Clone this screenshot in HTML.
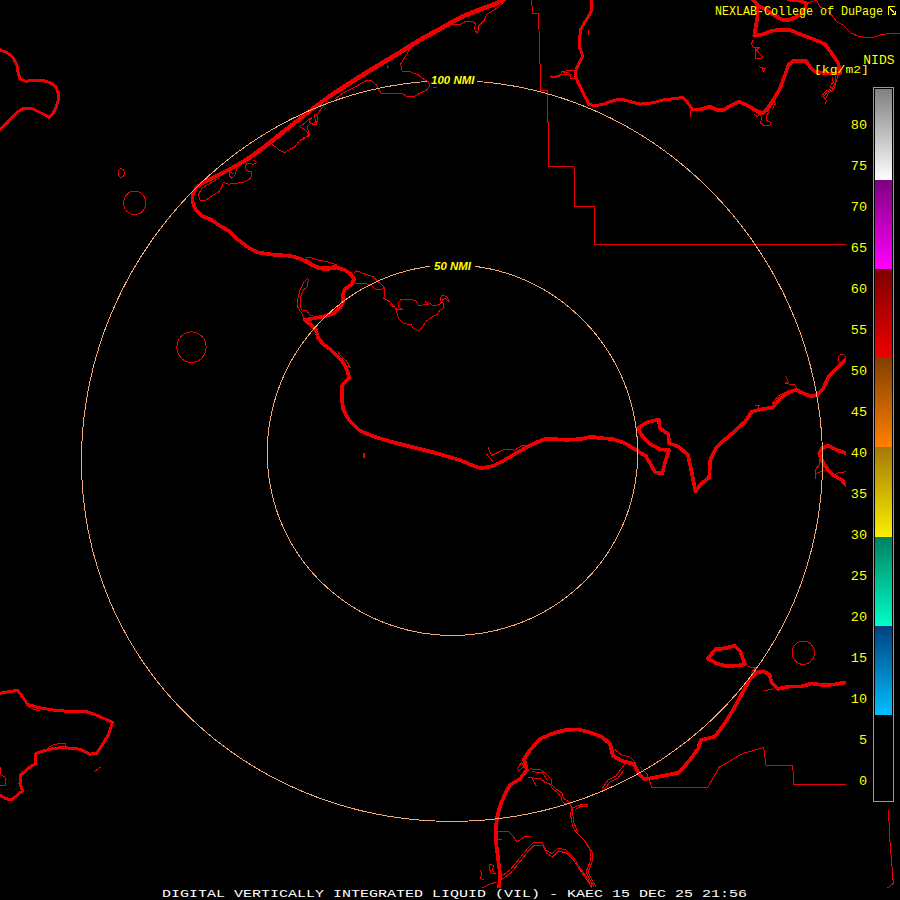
<!DOCTYPE html>
<html><head><meta charset="utf-8"><title>NEXLAB KAEC Digital VIL</title>
<style>
html,body{margin:0;padding:0;background:#000;}
body{width:900px;height:900px;position:relative;overflow:hidden;font-family:"Liberation Mono",monospace;}
svg{position:absolute;left:0;top:0;}
.t{position:absolute;white-space:pre;line-height:1;color:#ffff00;transform-origin:0 0;}
.lab{position:absolute;right:33.1px;width:40px;text-align:right;color:#ffff00;font-size:13px;line-height:1;white-space:pre;transform-origin:100% 0;transform:scale(1.04,1.05);}
.ring{position:absolute;color:#ffff00;font-family:"Liberation Sans",sans-serif;font-weight:bold;font-style:italic;font-size:11px;line-height:1;white-space:pre;padding:0 3px;transform-origin:0 0;transform:scale(1.04,0.95);}
</style></head><body>
<svg width="900" height="900" viewBox="0 0 900 900">
<defs><linearGradient id="g0" x1="0" y1="0" x2="0" y2="1"><stop offset="0" stop-color="#808080"/><stop offset="1" stop-color="#ffffff"/></linearGradient><linearGradient id="g1" x1="0" y1="0" x2="0" y2="1"><stop offset="0" stop-color="#800080"/><stop offset="1" stop-color="#ff00ff"/></linearGradient><linearGradient id="g2" x1="0" y1="0" x2="0" y2="1"><stop offset="0" stop-color="#7c0000"/><stop offset="1" stop-color="#f00000"/></linearGradient><linearGradient id="g3" x1="0" y1="0" x2="0" y2="1"><stop offset="0" stop-color="#804000"/><stop offset="1" stop-color="#ff8000"/></linearGradient><linearGradient id="g4" x1="0" y1="0" x2="0" y2="1"><stop offset="0" stop-color="#a57808"/><stop offset="1" stop-color="#faf000"/></linearGradient><linearGradient id="g5" x1="0" y1="0" x2="0" y2="1"><stop offset="0" stop-color="#008060"/><stop offset="1" stop-color="#00ffc8"/></linearGradient><linearGradient id="g6" x1="0" y1="0" x2="0" y2="1"><stop offset="0" stop-color="#004080"/><stop offset="1" stop-color="#00c0ff"/></linearGradient></defs>
<rect width="900" height="900" fill="#000"/>
<g fill="none" stroke="#ee0000" stroke-linejoin="round" stroke-linecap="round" shape-rendering="crispEdges">
<path stroke-width="1" d="M531.5 0.0 L532.7 13.3 L538.5 13.3 L540.8 90.5 L547.8 90.5 L548.3 166.8 L574.0 166.8 L574.7 206.5 L594.5 206.5 L595.0 244.5 L846.0 244.5 M640.0 767.0 L647.0 774.0 L651.7 787.3 L707.7 787.3 L719.3 767.0 L742.7 753.5 L763.7 747.6 L766.0 765.4 L792.8 765.4 L793.5 784.5 L846.0 784.5 M888.4 810.0 L890.0 842.2 L892.2 868.9 L893.3 883.3 L887.8 887.8 M806.7 3.3 L816.7 0.0 M816.7 0.0 L820.0 6.7 L826.7 10.0 L831.7 15.0 L836.7 21.7 L843.3 25.0 L851.1 33.3 L860.0 36.7 L871.1 37.8 L882.2 34.4 L893.3 33.3 L900.0 33.3 M327.5 101.7 L321.7 108.3 L316.7 115.0 L317.5 118.3 L316.7 124.2 L312.5 124.2 L309.2 121.7 L311.7 117.5 L308.3 120.0 L303.3 124.2 L299.2 126.7 L304.2 129.2 L307.5 132.5 L309.2 135.8 L304.2 137.5 L299.2 140.8 L295.0 146.7 L290.0 149.2 L285.0 152.5 L280.0 150.8 L276.7 147.5 L272.5 145.0 M253.3 160.0 L256.7 162.5 L253.3 164.2 L246.7 163.3 L245.0 166.7 L246.7 170.8 L251.7 171.7 L250.8 178.3 L243.3 182.5 L235.0 183.3 L228.3 184.2 L223.3 182.5 L221.7 187.5 L218.3 192.5 L211.7 195.8 L205.0 200.8 L200.0 200.0 L198.3 195.0 L201.7 188.3 L210.0 183.3 L218.3 178.3 M236.7 168.3 L235.0 175.0 L231.7 178.3 L229.2 175.8 L230.0 172.5 L233.3 173.3 M507.0 -1.0 L503.3 2.2 L496.7 8.3 L492.2 11.1 L486.7 14.4 L484.4 20.0 L478.9 25.6 L478.3 30.0 L477.2 33.3 L474.4 28.9 L475.6 23.9 L471.7 21.1 L465.6 21.1 L462.2 23.9 L457.8 24.4 L450.0 25.0 M412.0 46.0 L404.7 57.3 L400.7 64.0 L402.0 71.3 L408.7 71.3 L418.0 74.7 L424.7 80.0 L428.7 82.0 L429.3 86.7 L426.0 90.7 L420.7 92.7 L415.3 96.0 L406.0 96.0 L402.0 93.3 L392.7 93.3 L382.0 94.0 L378.0 89.3 L376.7 85.3 L371.3 80.7 L367.3 80.0 L356.7 86.0 L343.3 92.7 L335.3 98.7 M387.0 65.0 L388.0 67.5 M433.3 87.5 L437.3 88.0 M314.0 114.3 L316.3 122.5 L310.5 123.7 L307.0 127.2 L309.3 134.2 L302.3 140.0 M574.7 70.0 L568.0 70.5 L561.0 72.0 L561.0 74.5 L566.0 74.0 L570.0 75.5 L571.0 78.5 L574.7 78.0 M563.0 73.0 L568.0 72.5 L571.0 74.5 M588.2 30.3 L588.2 35.0 M690.2 110.8 L690.2 116.7 M753.3 40.0 L751.3 44.0 L753.3 47.3 L756.0 48.7 L755.3 58.7 L761.3 58.7 L762.7 57.3 L756.7 50.0 L759.3 47.3 L755.0 47.3 M759.3 66.7 L765.3 68.7 L763.3 71.3 L762.0 68.0 M754.7 114.7 L757.3 116.7 L760.0 113.3 L762.0 118.0 L760.0 123.3 L764.0 125.3 L770.0 125.3 L771.3 122.7 L766.7 120.7 L766.0 115.3 L768.7 112.7 M838.0 74.0 L836.7 80.7 L833.3 86.0 L832.0 90.0 L826.7 92.7 L823.3 96.7 L826.7 100.7 L825.3 104.0 M832.0 76.7 L833.3 82.0 L830.0 86.0 L832.0 88.7 L825.3 91.3 L821.3 96.7 M835.3 76.7 L836.0 83.3 L834.0 88.7 L828.0 94.0 L825.3 99.3 M774.0 100.7 L775.3 104.0 L772.7 108.7 M337.5 351.7 L343.3 358.7 L346.8 361.0 L350.3 368.0 L346.8 365.7 M305.0 258.3 L308.3 257.0 L318.3 260.0 L330.0 262.5 L336.7 265.0 L326.7 266.7 L316.7 265.8 L310.0 261.7 L305.0 258.3 M307.5 278.3 L304.2 281.7 L300.0 290.0 L297.5 300.0 L297.5 306.7 L301.7 313.3 L304.2 319.2 M307.5 278.3 L308.3 279.2 L307.5 286.7 L303.3 290.0 L300.0 298.3 L300.0 306.7 L302.5 310.8 L306.7 310.8 L310.0 315.0 L315.0 316.7 M354.2 272.5 L356.7 270.8 L365.0 274.2 L373.3 276.7 L379.2 282.5 L384.2 287.5 L385.0 295.0 L383.3 298.3 L388.3 300.8 L393.3 305.0 L396.7 311.7 L398.3 318.3 L403.3 323.3 L411.7 325.0 L413.3 328.3 L419.2 330.8 L421.7 327.5 L426.7 320.8 L432.5 316.7 L437.5 314.2 L440.0 310.0 L444.2 307.5 L443.3 303.3 L440.0 300.0 L441.7 295.0 L446.7 296.7 L449.2 301.7 L445.0 298.3 L442.5 300.0 L440.0 304.2 L433.3 305.8 L430.0 303.3 L425.0 301.7 L428.3 304.2 L418.3 305.8 L415.8 300.8 L410.0 299.2 L400.8 299.7 L398.3 303.3 L399.2 307.5 L402.5 309.2 L396.7 309.2 L390.0 304.2 M355.0 283.3 L365.0 283.3 L371.7 285.8 L375.0 289.2 L380.8 290.0 L384.2 287.5 M488.0 447.3 L491.5 455.5 L504.3 449.2 L514.8 450.1 L523.0 445.0 L530.0 446.0 M486.8 454.3 L492.7 461.3 M364.3 453.5 L365.0 457.5 L363.5 457.5 L363.5 453.5 L364.3 453.5 M785.8 376.7 L788.3 381.7 L785.0 383.3 L795.0 385.0 L797.0 389.0 M755.0 405.0 L759.2 405.0 L758.3 407.5 M819.2 455.0 L819.2 465.0 L815.0 470.0 L815.0 479.2 M816.7 473.3 L825.0 470.0 M836.7 473.3 L846.0 471.7 M772.0 404.0 L778.0 396.0 L786.0 392.0 M0.0 766.7 L0.8 775.0 L5.8 777.5 L5.8 785.0 L0.0 785.0 M94.2 771.7 L100.0 767.5 M48.3 747.5 L55.0 744.2 L65.0 743.3 L65.0 746.5 M26.0 705.0 L33.0 709.0 L40.0 711.0 M570.6 803.9 L571.7 808.3 L570.6 815.0 L571.7 821.7 L573.3 828.3 L576.0 832.0 L584.0 840.0 L590.0 850.0 L590.0 862.0 L586.0 872.0 L590.0 880.0 L594.0 887.0 M572.2 807.2 L572.8 813.9 L573.9 822.8 L576.7 829.4 L578.0 834.0 L586.0 842.0 L592.0 852.0 L592.0 862.0 L588.0 872.0 L592.0 880.0 L596.0 887.0 M530.0 768.9 L540.0 769.4 L546.7 774.4 L551.1 779.4 L551.7 785.0 L556.7 789.4 L562.2 793.3 L563.3 798.3 L567.2 800.6 L570.6 803.9 M528.0 777.0 L532.2 777.8 L541.1 778.9 L545.6 782.8 L549.4 783.3 L552.2 788.3 L557.8 792.8 L561.1 797.2 L562.2 801.7 L565.6 803.9 L570.6 803.9 M532.2 771.7 L542.2 772.8 L545.6 777.2 L547.8 781.1 M532.2 777.8 L533.9 781.7 L536.1 785.6 L535.0 783.0 M521.1 762.8 L517.8 768.3 L518.9 771.1 L524.4 766.1 L521.1 762.8 M572.8 808.3 L577.8 805.6 L583.3 804.4 L588.3 805.0 L586.7 806.7 L581.1 806.1 L575.6 809.4 M602.0 789.0 L608.0 780.0 L616.0 776.0 L622.0 768.0 L626.0 762.0 M604.0 790.0 L610.0 782.0 L618.0 778.0 L624.0 770.0 M614.0 749.0 L622.0 755.0 L630.0 757.0 L636.0 763.0 M497.0 831.0 L508.0 831.0 L513.0 836.0 L517.0 842.0 L524.0 837.0 L531.0 836.4 M497.0 839.0 L502.0 839.0 M502.0 876.0 L510.0 870.0 L520.0 858.0 L528.0 848.0 L534.0 842.0 L542.0 842.0 L546.0 850.0 L552.0 854.0 L558.0 848.0 L566.0 850.0 L574.0 858.0 L580.0 868.0 L586.0 876.0 L592.0 886.0 M502.5 879.0 L510.5 873.0 L520.5 861.0 L528.5 851.0 L534.5 845.0 L542.5 845.0 L546.5 853.0 L552.5 857.0 L558.5 851.0 L566.5 853.0 L574.5 861.0 L580.5 871.0 L586.5 879.0 L592.5 889.0 M480.0 870.0 L482.0 874.0 L480.0 878.0 L484.0 880.0 M490.0 864.0 L494.0 866.0 L492.0 870.0 L496.0 874.0 L491.0 873.0 L489.0 868.0 L490.0 864.0 M482.0 888.0 L490.0 884.0 L497.0 882.0 M748.5 666.7 L755.5 667.8 L751.0 673.0 M763.7 691.2 L773.0 688.8"/>
<path stroke-width="2" d="M550.5 76.5 L555.0 77.0 L560.5 75.2"/>
<path stroke-width="4.6" d="M511.0 -6.0 L501.0 0.3 L496.7 3.3 L480.0 9.5 L463.3 16.1 L450.0 23.3 L436.7 30.7 L423.3 38.0 L410.0 46.0 L396.7 54.4 L383.3 62.4 L370.0 70.4 L356.7 78.7 L343.3 87.3 L330.0 96.0"/>
<path stroke-width="4" d="M330.0 96.0 L325.0 99.5 L313.3 108.3 L296.7 121.2 L280.0 134.2 L263.3 147.5 L246.7 159.5 L230.0 169.2 L213.3 177.5 L203.0 183.0"/>
<g stroke-width="1"><ellipse cx="121.2" cy="173.0" rx="3.2" ry="4.2"/><ellipse cx="134.7" cy="202.9" rx="11.1" ry="11.8"/><ellipse cx="191.5" cy="347.2" rx="14.6" ry="15.3"/><ellipse cx="803.3" cy="652.7" rx="11.2" ry="11.7"/><ellipse cx="842.0" cy="359.0" rx="4.0" ry="4.3"/></g>
<path stroke-width="3" d="M-4.6 47.8 L0.0 49.7 L6.7 52.5 L12.5 56.7 L16.7 64.2 L18.3 73.3 L20.0 78.7 L25.8 81.3 L33.3 80.3 L41.7 80.3 L50.0 82.5 L55.8 86.7 L58.3 93.3 L58.3 100.0 L55.8 108.3 L52.5 114.2 L49.2 117.2 L40.0 112.5 L31.7 108.3 L23.3 108.3 L16.7 112.5 L8.3 121.7 L0.0 129.7 L-3.6 133.2 M590.8 -5.0 L591.1 0.0 L591.8 10.2 L588.6 16.6 L584.7 22.4 L580.9 28.8 L579.6 38.3 L579.0 46.0 L581.5 52.4 L582.8 56.2 L579.6 62.6 L575.8 70.3 L575.1 75.4 L577.7 81.8 L582.2 90.7 L586.0 98.4 L589.2 104.8 L596.2 105.4 L602.6 104.5 L610.3 101.6 L617.9 99.4 L624.3 99.9 L632.0 102.2 L640.0 104.1 L654.0 102.7 L663.3 99.9 L675.0 98.5 L683.2 97.5 L687.8 102.7 L692.5 109.7 L700.0 109.5 M-4.9 694.2 L0.0 693.3 L8.3 691.7 L17.5 690.3 L22.5 696.7 L27.5 704.2 L38.3 707.5 L53.3 710.0 L66.7 711.3 L85.8 711.3 L98.3 715.8 L112.5 722.5 L108.3 735.0 L103.3 743.3 L96.7 753.3 L90.0 754.2 L80.0 749.2 L71.7 748.3 L61.7 747.5 L50.0 749.2 L35.8 753.3 L35.8 763.3 L28.3 768.3 L20.8 775.0 L20.0 783.3 L22.5 790.8 L16.7 795.8 L10.8 800.0 L5.0 798.3 L0.0 795.0 L-4.2 792.2"/>
<path stroke-width="3.7" d="M511.0 -6.0 L501.0 0.3 L496.7 3.3 L480.0 9.5 L463.3 16.1 L450.0 23.3 L436.7 30.7 L423.3 38.0 L410.0 46.0 L396.7 54.4 L383.3 62.4 L370.0 70.4 L356.7 78.7 L343.3 87.3 L330.0 96.0 L325.0 99.5 L313.3 108.3 L296.7 121.7 L280.0 135.0 L263.3 148.3 L246.7 160.0 L230.0 169.2 L213.3 177.5 L201.7 183.3 L195.8 188.3 L192.5 195.0 L192.5 201.7 L195.8 210.0 L201.7 215.8 L211.7 220.0 L220.0 225.8 L230.0 231.7 L238.3 240.0 L248.3 247.5 L258.3 252.5 L273.3 254.7 L290.0 255.8 L301.7 259.2 L310.0 264.2 L318.3 268.3 L326.7 269.2 L336.7 267.5 L345.0 270.0 L350.8 274.2 L354.2 279.2 L351.7 284.2 L345.0 289.2 L342.5 295.0 L343.3 301.7 L340.0 307.5 L333.3 313.3 L323.3 316.7 L313.3 318.3 L305.0 320.0 L310.0 324.2 L315.8 330.0 L318.3 338.3 L323.3 344.2 L331.7 350.5 L342.2 361.0 L346.8 369.2 L349.2 377.3 L342.2 385.5 L341.7 398.3 L343.3 410.0 L349.2 420.5 L358.5 429.8 L371.3 435.7 L390.0 441.5 L413.3 447.3 L436.7 453.2 L460.0 460.2 L474.0 466.0 L481.0 468.3 L492.7 466.0 L504.3 460.2 L516.0 453.2 L531.7 444.5 L545.7 438.7 L566.7 439.8 L580.7 439.1 L591.2 436.8 L601.7 438.2 L613.3 439.1 L625.0 443.3 L636.7 450.3 L646.0 456.2 L650.7 464.3 L655.3 472.5 L662.3 473.2 L665.8 459.7 L669.3 450.3 L660.0 449.2 L650.7 444.5 L642.5 436.3 L637.8 428.2 L647.2 422.3 L658.8 419.5 L660.0 428.2 L668.2 434.0 L669.3 443.3 L678.7 446.8 L688.0 455.0 L691.5 471.3 L695.5 491.2 L700.8 484.2 L709.2 477.5 L710.3 460.0 L715.8 448.3 L723.3 440.8 L733.3 432.5 L745.0 421.7 L751.7 411.7 L761.7 409.2 L772.5 407.5 L780.0 398.3 L788.3 392.5 L795.8 389.7 L803.3 393.3 L810.8 396.3 L817.5 395.0 L823.3 388.3 L829.2 375.8 L836.7 368.3 L845.0 359.7 M700.0 109.5 L710.0 106.7 L716.7 110.0 L723.3 110.0 L731.7 105.0 L739.2 101.7 L746.7 105.0 L755.0 110.0 L762.5 113.3 L766.7 110.0 L773.3 100.0 L780.0 88.3 L785.0 75.0 L788.3 65.0 L793.3 60.8 L805.8 60.8 L810.0 66.7 L815.0 71.7 L828.0 73.5 L840.0 73.3 L838.3 63.3 L831.7 53.3 L825.0 44.2 L813.3 39.2 L800.0 34.2 L790.0 30.0 L780.0 29.7 L771.7 30.8 L763.3 34.2 L754.2 35.8 L755.8 26.7 L757.5 16.7 L757.5 5.0 L753.3 0.0 L750.1 -3.8 M757.5 5.0 L766.7 10.0 L775.0 15.8 L783.3 20.0 L790.0 19.7 L800.0 15.0 L804.2 10.0 L806.7 3.3 L800.0 0.8 L793.3 0.0 L788.3 -0.6 M845.8 453.3 L836.7 450.0 L828.3 445.8 L821.7 448.3 L819.2 453.3 L821.7 460.0 L826.7 468.3 L833.3 475.0 L841.7 480.0 L845.8 485.0 M499.0 890.0 L500.0 874.0 L498.0 858.0 L496.0 842.0 L495.6 830.0 L497.0 818.0 L500.0 806.0 L505.0 794.0 L510.0 785.0 L520.0 779.0 L527.0 770.0 L524.0 759.0 L530.0 750.0 L540.0 739.0 L554.0 733.0 L566.0 730.0 L578.0 729.4 L590.0 732.4 L602.0 737.0 L610.0 744.0 L613.0 756.0 L622.0 761.0 L634.0 764.0 L639.0 774.0 L644.0 779.0 L651.7 778.2 L665.7 775.2 L678.5 772.8 L689.0 761.2 L698.3 748.3 L700.7 740.2 L714.7 736.7 L722.8 726.2 L733.3 709.8 L742.7 692.3 L749.7 679.5 L756.7 672.5 L763.7 671.3 L769.5 674.8 L771.8 683.0 L777.7 688.8 L789.3 686.5 L801.0 686.5 L811.5 683.5 L822.0 684.9 L833.7 684.6 L845.3 682.5 M707.7 658.5 L715.8 649.2 L726.3 648.0 L734.5 645.7 L740.3 651.5 L745.0 664.3 L738.0 665.5 L726.3 666.2 L715.8 663.2 L707.7 658.5"/>
</g>
<g fill="none" stroke="#f2a878" stroke-width="1" shape-rendering="crispEdges">
<path d="M477.2 81.5 L480.3 81.7 L483.4 82.0 L486.6 82.3 L489.7 82.6 L492.8 83.0 L496.0 83.4 L499.1 83.8 L502.2 84.2 L505.3 84.7 L508.5 85.2 L511.6 85.7 L514.7 86.2 L517.8 86.8 L520.9 87.4 L524.0 88.0 L527.1 88.7 L530.1 89.4 L533.2 90.1 L536.3 90.8 L539.3 91.6 L542.4 92.4 L545.5 93.2 L548.5 94.1 L551.5 94.9 L554.6 95.9 L557.6 96.8 L560.6 97.7 L563.6 98.7 L566.6 99.7 L569.6 100.8 L572.6 101.8 L575.6 102.9 L578.6 104.1 L581.5 105.2 L584.5 106.4 L587.4 107.6 L590.3 108.8 L593.3 110.0 L596.2 111.3 L599.1 112.6 L602.0 114.0 L604.8 115.3 L607.7 116.7 L610.6 118.1 L613.4 119.5 L616.3 121.0 L619.1 122.5 L621.9 124.0 L624.7 125.5 L627.5 127.0 L630.3 128.6 L633.0 130.2 L635.8 131.9 L638.5 133.5 L641.2 135.2 L644.0 136.9 L646.7 138.6 L649.3 140.4 L652.0 142.1 L654.7 143.9 L657.3 145.7 L659.9 147.6 L662.5 149.5 L665.1 151.3 L667.7 153.3 L670.3 155.2 L672.8 157.1 L675.4 159.1 L677.9 161.1 L680.4 163.1 L682.9 165.2 L685.3 167.3 L687.8 169.3 L690.2 171.5 L692.7 173.6 L695.1 175.7 L697.4 177.9 L699.8 180.1 L702.2 182.3 L704.5 184.6 L706.8 186.8 L709.1 189.1 L711.4 191.4 L713.6 193.7 L715.9 196.0 L718.1 198.4 L720.3 200.8 L722.5 203.2 L724.6 205.6 L726.8 208.0 L728.9 210.4 L731.0 212.9 L733.1 215.4 L735.1 217.9 L737.2 220.4 L739.2 223.0 L741.2 225.5 L743.2 228.1 L745.1 230.7 L747.1 233.3 L749.0 235.9 L750.9 238.5 L752.8 241.2 L754.6 243.9 L756.4 246.6 L758.2 249.3 L760.0 252.0 L761.8 254.7 L763.5 257.5 L765.2 260.2 L766.9 263.0 L768.6 265.8 L770.3 268.6 L771.9 271.4 L773.5 274.3 L775.1 277.1 L776.6 280.0 L778.1 282.8 L779.6 285.7 L781.1 288.6 L782.6 291.5 L784.0 294.5 L785.4 297.4 L786.8 300.3 L788.2 303.3 L789.5 306.3 L790.8 309.3 L792.1 312.2 L793.3 315.2 L794.6 318.3 L795.8 321.3 L797.0 324.3 L798.1 327.4 L799.3 330.4 L800.4 333.5 L801.4 336.5 L802.5 339.6 L803.5 342.7 L804.5 345.8 L805.5 348.9 L806.4 352.0 L807.4 355.1 L808.3 358.3 L809.1 361.4 L810.0 364.5 L810.8 367.7 L811.6 370.8 L812.3 374.0 L813.1 377.2 L813.8 380.3 L814.5 383.5 L815.1 386.7 L815.8 389.9 L816.4 393.1 L816.9 396.3 L817.5 399.5 L818.0 402.7 L818.5 405.9 L818.9 409.1 L819.4 412.3 L819.8 415.5 L820.2 418.7 L820.5 421.9 L820.8 425.2 L821.1 428.4 L821.4 431.6 L821.6 434.8 L821.8 438.1 L822.0 441.3 L822.2 444.5 L822.3 447.8 L822.4 451.0 L822.5 454.2 L822.5 457.5 L822.5 460.7 L822.5 463.9 L822.5 467.2 L822.4 470.4 L822.3 473.6 L822.2 476.8 L822.0 480.1 L821.8 483.3 L821.6 486.5 L821.4 489.7 L821.1 492.9 L820.8 496.1 L820.5 499.3 L820.1 502.5 L819.7 505.7 L819.3 508.9 L818.9 512.1 L818.4 515.3 L817.9 518.5 L817.4 521.7 L816.8 524.8 L816.3 528.0 L815.7 531.2 L815.0 534.3 L814.4 537.5 L813.7 540.6 L812.9 543.7 L812.2 546.9 L811.4 550.0 L810.6 553.1 L809.8 556.2 L808.9 559.3 L808.0 562.4 L807.1 565.5 L806.2 568.5 L805.2 571.6 L804.2 574.6 L803.2 577.7 L802.1 580.7 L801.0 583.7 L799.9 586.8 L798.8 589.8 L797.6 592.7 L796.4 595.7 L795.2 598.7 L794.0 601.7 L792.7 604.6 L791.4 607.5 L790.1 610.5 L788.7 613.4 L787.3 616.3 L785.9 619.2 L784.5 622.0 L783.0 624.9 L781.6 627.7 L780.0 630.6 L778.5 633.4 L776.9 636.2 L775.4 639.0 L773.7 641.8 L772.1 644.5 L770.4 647.3 L768.8 650.0 L767.0 652.7 L765.3 655.4 L763.5 658.1 L761.8 660.8 L759.9 663.5 L758.1 666.1 L756.2 668.7 L754.4 671.3 L752.4 673.9 L750.5 676.5 L748.6 679.0 L746.6 681.6 L744.6 684.1 L742.5 686.6 L740.5 689.1 L738.4 691.6 L736.3 694.0 L734.2 696.4 L732.0 698.8 L729.9 701.2 L727.7 703.6 L725.5 706.0 L723.3 708.3 L721.0 710.6 L718.7 712.9 L716.4 715.2 L714.1 717.4 L711.8 719.7 L709.4 721.9 L707.0 724.1 L704.6 726.3 L702.2 728.4 L699.8 730.5 L697.3 732.7 L694.8 734.7 L692.3 736.8 L689.8 738.9 L687.3 740.9 L684.7 742.9 L682.1 744.9 L679.5 746.8 L676.9 748.7 L674.3 750.7 L671.6 752.5 L669.0 754.4 L666.3 756.3 L663.6 758.1 L660.9 759.9 L658.1 761.6 L655.4 763.4 L652.6 765.1 L649.8 766.8 L647.0 768.5 L644.2 770.1 L641.4 771.8 L638.5 773.4 L635.7 775.0 L632.8 776.5 L629.9 778.0 L627.0 779.5 L624.1 781.0 L621.1 782.5 L618.2 783.9 L615.2 785.3 L612.2 786.7 L609.2 788.0 L606.2 789.4 L603.2 790.7 L600.2 792.0 L597.2 793.2 L594.1 794.4 L591.0 795.6 L588.0 796.8 L584.9 797.9 L581.8 799.1 L578.7 800.2 L575.6 801.2 L572.4 802.3 L569.3 803.3 L566.1 804.3 L563.0 805.2 L559.8 806.1 L556.6 807.1 L553.5 807.9 L550.3 808.8 L547.1 809.6 L543.9 810.4 L540.7 811.2 L537.4 811.9 L534.2 812.6 L531.0 813.3 L527.7 814.0 L524.5 814.6 L521.2 815.2 L518.0 815.8 L514.7 816.3 L511.4 816.8 L508.2 817.3 L504.9 817.8 L501.6 818.2 L498.3 818.6 L495.0 819.0 L491.7 819.4 L488.4 819.7 L485.1 820.0 L481.8 820.3 L478.5 820.5 L475.2 820.7 L471.9 820.9 L468.6 821.0 L465.3 821.2 L461.9 821.3 L458.6 821.3 L455.3 821.4 L452.0 821.4 L448.7 821.4 L445.4 821.3 L442.1 821.3 L438.7 821.2 L435.4 821.0 L432.1 820.9 L428.8 820.7 L425.5 820.5 L422.2 820.3 L418.9 820.0 L415.6 819.7 L412.3 819.4 L409.0 819.0 L405.7 818.6 L402.4 818.2 L399.1 817.8 L395.8 817.3 L392.6 816.8 L389.3 816.3 L386.0 815.8 L382.8 815.2 L379.5 814.6 L376.3 814.0 L373.0 813.3 L369.8 812.6 L366.6 811.9 L363.3 811.2 L360.1 810.4 L356.9 809.6 L353.7 808.8 L350.5 807.9 L347.4 807.1 L344.2 806.1 L341.0 805.2 L337.9 804.3 L334.7 803.3 L331.6 802.3 L328.4 801.2 L325.3 800.2 L322.2 799.1 L319.1 797.9 L316.0 796.8 L313.0 795.6 L309.9 794.4 L306.8 793.2 L303.8 792.0 L300.8 790.7 L297.8 789.4 L294.8 788.0 L291.8 786.7 L288.8 785.3 L285.8 783.9 L282.9 782.5 L279.9 781.0 L277.0 779.5 L274.1 778.0 L271.2 776.5 L268.3 775.0 L265.5 773.4 L262.6 771.8 L259.8 770.1 L257.0 768.5 L254.2 766.8 L251.4 765.1 L248.6 763.4 L245.9 761.6 L243.1 759.9 L240.4 758.1 L237.7 756.3 L235.0 754.4 L232.4 752.5 L229.7 750.7 L227.1 748.7 L224.5 746.8 L221.9 744.9 L219.3 742.9 L216.7 740.9 L214.2 738.9 L211.7 736.8 L209.2 734.7 L206.7 732.7 L204.2 730.5 L201.8 728.4 L199.4 726.3 L197.0 724.1 L194.6 721.9 L192.2 719.7 L189.9 717.4 L187.6 715.2 L185.3 712.9 L183.0 710.6 L180.7 708.3 L178.5 706.0 L176.3 703.6 L174.1 701.2 L172.0 698.8 L169.8 696.4 L167.7 694.0 L165.6 691.6 L163.5 689.1 L161.5 686.6 L159.4 684.1 L157.4 681.6 L155.4 679.0 L153.5 676.5 L151.6 673.9 L149.6 671.3 L147.8 668.7 L145.9 666.1 L144.1 663.5 L142.2 660.8 L140.5 658.1 L138.7 655.4 L137.0 652.7 L135.2 650.0 L133.6 647.3 L131.9 644.5 L130.3 641.8 L128.6 639.0 L127.1 636.2 L125.5 633.4 L124.0 630.6 L122.4 627.7 L121.0 624.9 L119.5 622.0 L118.1 619.2 L116.7 616.3 L115.3 613.4 L113.9 610.5 L112.6 607.5 L111.3 604.6 L110.0 601.7 L108.8 598.7 L107.6 595.7 L106.4 592.7 L105.2 589.8 L104.1 586.8 L103.0 583.7 L101.9 580.7 L100.8 577.7 L99.8 574.6 L98.8 571.6 L97.8 568.5 L96.9 565.5 L96.0 562.4 L95.1 559.3 L94.2 556.2 L93.4 553.1 L92.6 550.0 L91.8 546.9 L91.1 543.7 L90.3 540.6 L89.6 537.5 L89.0 534.3 L88.3 531.2 L87.7 528.0 L87.2 524.8 L86.6 521.7 L86.1 518.5 L85.6 515.3 L85.1 512.1 L84.7 508.9 L84.3 505.7 L83.9 502.5 L83.5 499.3 L83.2 496.1 L82.9 492.9 L82.6 489.7 L82.4 486.5 L82.2 483.3 L82.0 480.1 L81.8 476.8 L81.7 473.6 L81.6 470.4 L81.5 467.2 L81.5 463.9 L81.5 460.7 L81.5 457.5 L81.5 454.2 L81.6 451.0 L81.7 447.8 L81.8 444.5 L82.0 441.3 L82.2 438.1 L82.4 434.8 L82.6 431.6 L82.9 428.4 L83.2 425.2 L83.5 421.9 L83.8 418.7 L84.2 415.5 L84.6 412.3 L85.1 409.1 L85.5 405.9 L86.0 402.7 L86.5 399.5 L87.1 396.3 L87.6 393.1 L88.2 389.9 L88.9 386.7 L89.5 383.5 L90.2 380.3 L90.9 377.2 L91.7 374.0 L92.4 370.8 L93.2 367.7 L94.0 364.5 L94.9 361.4 L95.7 358.3 L96.6 355.1 L97.6 352.0 L98.5 348.9 L99.5 345.8 L100.5 342.7 L101.5 339.6 L102.6 336.5 L103.6 333.5 L104.7 330.4 L105.9 327.4 L107.0 324.3 L108.2 321.3 L109.4 318.3 L110.7 315.2 L111.9 312.2 L113.2 309.3 L114.5 306.3 L115.8 303.3 L117.2 300.3 L118.6 297.4 L120.0 294.5 L121.4 291.5 L122.9 288.6 L124.4 285.7 L125.9 282.8 L127.4 280.0 L128.9 277.1 L130.5 274.3 L132.1 271.4 L133.7 268.6 L135.4 265.8 L137.1 263.0 L138.8 260.2 L140.5 257.5 L142.2 254.7 L144.0 252.0 L145.8 249.3 L147.6 246.6 L149.4 243.9 L151.2 241.2 L153.1 238.5 L155.0 235.9 L156.9 233.3 L158.9 230.7 L160.8 228.1 L162.8 225.5 L164.8 223.0 L166.8 220.4 L168.9 217.9 L170.9 215.4 L173.0 212.9 L175.1 210.4 L177.2 208.0 L179.4 205.6 L181.5 203.2 L183.7 200.8 L185.9 198.4 L188.1 196.0 L190.4 193.7 L192.6 191.4 L194.9 189.1 L197.2 186.8 L199.5 184.6 L201.8 182.3 L204.2 180.1 L206.6 177.9 L208.9 175.7 L211.3 173.6 L213.8 171.5 L216.2 169.3 L218.7 167.3 L221.1 165.2 L223.6 163.1 L226.1 161.1 L228.6 159.1 L231.2 157.1 L233.7 155.2 L236.3 153.3 L238.9 151.3 L241.5 149.5 L244.1 147.6 L246.7 145.7 L249.3 143.9 L252.0 142.1 L254.7 140.4 L257.3 138.6 L260.0 136.9 L262.8 135.2 L265.5 133.5 L268.2 131.9 L271.0 130.2 L273.7 128.6 L276.5 127.0 L279.3 125.5 L282.1 124.0 L284.9 122.5 L287.7 121.0 L290.6 119.5 L293.4 118.1 L296.3 116.7 L299.2 115.3 L302.0 114.0 L304.9 112.6 L307.8 111.3 L310.7 110.0 L313.7 108.8 L316.6 107.6 L319.5 106.4 L322.5 105.2 L325.4 104.1 L328.4 102.9 L331.4 101.8 L334.4 100.8 L337.4 99.7 L340.4 98.7 L343.4 97.7 L346.4 96.8 L349.4 95.9 L352.5 94.9 L355.5 94.1 L358.5 93.2 L361.6 92.4 L364.7 91.6 L367.7 90.8 L370.8 90.1 L373.9 89.4 L376.9 88.7 L380.0 88.0 L383.1 87.4 L386.2 86.8 L389.3 86.2 L392.4 85.7 L395.5 85.2 L398.7 84.7 L401.8 84.2 L404.9 83.8 L408.0 83.4 L411.2 83.0 L414.3 82.6 L417.4 82.3 L420.6 82.0 L423.7 81.7 L426.8 81.5"/><path d="M474.8 266.4 L476.4 266.6 L477.9 266.8 L479.5 267.0 L481.1 267.3 L482.7 267.5 L484.2 267.8 L485.8 268.1 L487.4 268.4 L489.0 268.7 L490.5 269.0 L492.1 269.4 L493.6 269.7 L495.2 270.1 L496.7 270.5 L498.3 270.9 L499.8 271.3 L501.4 271.7 L502.9 272.2 L504.4 272.6 L506.0 273.1 L507.5 273.6 L509.0 274.1 L510.5 274.6 L512.1 275.1 L513.6 275.6 L515.1 276.2 L516.6 276.7 L518.1 277.3 L519.6 277.9 L521.0 278.5 L522.5 279.1 L524.0 279.7 L525.5 280.4 L526.9 281.0 L528.4 281.7 L529.8 282.4 L531.3 283.0 L532.7 283.7 L534.2 284.5 L535.6 285.2 L537.0 285.9 L538.4 286.7 L539.9 287.4 L541.3 288.2 L542.7 289.0 L544.1 289.8 L545.4 290.6 L546.8 291.5 L548.2 292.3 L549.6 293.1 L550.9 294.0 L552.3 294.9 L553.6 295.8 L554.9 296.7 L556.3 297.6 L557.6 298.5 L558.9 299.4 L560.2 300.4 L561.5 301.3 L562.8 302.3 L564.1 303.3 L565.4 304.3 L566.6 305.3 L567.9 306.3 L569.1 307.3 L570.4 308.3 L571.6 309.4 L572.8 310.4 L574.0 311.5 L575.2 312.6 L576.4 313.7 L577.6 314.8 L578.8 315.9 L579.9 317.0 L581.1 318.1 L582.3 319.2 L583.4 320.4 L584.5 321.5 L585.6 322.7 L586.7 323.9 L587.8 325.1 L588.9 326.3 L590.0 327.5 L591.1 328.7 L592.1 329.9 L593.2 331.2 L594.2 332.4 L595.2 333.6 L596.3 334.9 L597.3 336.2 L598.3 337.5 L599.3 338.7 L600.2 340.0 L601.2 341.3 L602.1 342.7 L603.1 344.0 L604.0 345.3 L604.9 346.6 L605.8 348.0 L606.7 349.3 L607.6 350.7 L608.5 352.1 L609.3 353.4 L610.2 354.8 L611.0 356.2 L611.8 357.6 L612.7 359.0 L613.5 360.4 L614.2 361.8 L615.0 363.3 L615.8 364.7 L616.5 366.1 L617.3 367.6 L618.0 369.0 L618.7 370.5 L619.4 371.9 L620.1 373.4 L620.8 374.9 L621.5 376.4 L622.1 377.8 L622.8 379.3 L623.4 380.8 L624.0 382.3 L624.6 383.8 L625.2 385.3 L625.8 386.9 L626.3 388.4 L626.9 389.9 L627.4 391.4 L627.9 393.0 L628.4 394.5 L628.9 396.1 L629.4 397.6 L629.9 399.2 L630.3 400.7 L630.8 402.3 L631.2 403.8 L631.6 405.4 L632.0 407.0 L632.4 408.5 L632.8 410.1 L633.2 411.7 L633.5 413.3 L633.8 414.9 L634.2 416.4 L634.5 418.0 L634.8 419.6 L635.0 421.2 L635.3 422.8 L635.6 424.4 L635.8 426.0 L636.0 427.6 L636.2 429.2 L636.4 430.8 L636.6 432.4 L636.8 434.1 L636.9 435.7 L637.1 437.3 L637.2 438.9 L637.3 440.5 L637.4 442.1 L637.5 443.7 L637.6 445.4 L637.6 447.0 L637.7 448.6 L637.7 450.2 L637.7 451.8 L637.7 453.4 L637.7 455.0 L637.7 456.7 L637.6 458.3 L637.6 459.9 L637.5 461.5 L637.4 463.1 L637.3 464.7 L637.2 466.3 L637.1 468.0 L636.9 469.6 L636.8 471.2 L636.6 472.8 L636.4 474.4 L636.2 476.0 L636.0 477.6 L635.8 479.2 L635.6 480.8 L635.3 482.4 L635.0 484.0 L634.7 485.5 L634.5 487.1 L634.1 488.7 L633.8 490.3 L633.5 491.9 L633.1 493.4 L632.8 495.0 L632.4 496.6 L632.0 498.1 L631.6 499.7 L631.2 501.2 L630.7 502.8 L630.3 504.3 L629.8 505.9 L629.3 507.4 L628.9 509.0 L628.4 510.5 L627.8 512.0 L627.3 513.5 L626.8 515.1 L626.2 516.6 L625.6 518.1 L625.1 519.6 L624.5 521.1 L623.8 522.6 L623.2 524.0 L622.6 525.5 L621.9 527.0 L621.3 528.5 L620.6 529.9 L619.9 531.4 L619.2 532.8 L618.5 534.3 L617.8 535.7 L617.0 537.1 L616.3 538.6 L615.5 540.0 L614.7 541.4 L613.9 542.8 L613.1 544.2 L612.3 545.6 L611.5 547.0 L610.6 548.3 L609.8 549.7 L608.9 551.1 L608.0 552.4 L607.2 553.8 L606.3 555.1 L605.3 556.4 L604.4 557.7 L603.5 559.1 L602.5 560.4 L601.6 561.7 L600.6 562.9 L599.6 564.2 L598.6 565.5 L597.6 566.8 L596.6 568.0 L595.6 569.2 L594.5 570.5 L593.5 571.7 L592.4 572.9 L591.3 574.1 L590.2 575.3 L589.1 576.5 L588.0 577.7 L586.9 578.9 L585.8 580.0 L584.7 581.2 L583.5 582.3 L582.4 583.4 L581.2 584.5 L580.0 585.6 L578.8 586.7 L577.6 587.8 L576.4 588.9 L575.2 590.0 L574.0 591.0 L572.7 592.1 L571.5 593.1 L570.2 594.1 L569.0 595.1 L567.7 596.1 L566.4 597.1 L565.1 598.1 L563.8 599.1 L562.5 600.0 L561.2 601.0 L559.9 601.9 L558.5 602.8 L557.2 603.7 L555.8 604.6 L554.5 605.5 L553.1 606.4 L551.7 607.3 L550.3 608.1 L548.9 608.9 L547.5 609.8 L546.1 610.6 L544.7 611.4 L543.3 612.2 L541.9 613.0 L540.4 613.7 L539.0 614.5 L537.6 615.2 L536.1 615.9 L534.6 616.7 L533.2 617.4 L531.7 618.0 L530.2 618.7 L528.7 619.4 L527.2 620.0 L525.7 620.7 L524.2 621.3 L522.7 621.9 L521.2 622.5 L519.7 623.1 L518.1 623.7 L516.6 624.2 L515.1 624.8 L513.5 625.3 L512.0 625.8 L510.4 626.3 L508.9 626.8 L507.3 627.3 L505.8 627.8 L504.2 628.2 L502.6 628.7 L501.0 629.1 L499.5 629.5 L497.9 629.9 L496.3 630.3 L494.7 630.7 L493.1 631.0 L491.5 631.4 L489.9 631.7 L488.3 632.0 L486.7 632.3 L485.1 632.6 L483.5 632.9 L481.8 633.1 L480.2 633.4 L478.6 633.6 L477.0 633.8 L475.4 634.0 L473.7 634.2 L472.1 634.4 L470.5 634.5 L468.9 634.7 L467.2 634.8 L465.6 634.9 L464.0 635.1 L462.3 635.1 L460.7 635.2 L459.0 635.3 L457.4 635.3 L455.8 635.4 L454.1 635.4 L452.5 635.4 L450.9 635.4 L449.2 635.4 L447.6 635.3 L446.0 635.3 L444.3 635.2 L442.7 635.1 L441.0 635.1 L439.4 634.9 L437.8 634.8 L436.1 634.7 L434.5 634.5 L432.9 634.4 L431.3 634.2 L429.6 634.0 L428.0 633.8 L426.4 633.6 L424.8 633.4 L423.2 633.1 L421.5 632.9 L419.9 632.6 L418.3 632.3 L416.7 632.0 L415.1 631.7 L413.5 631.4 L411.9 631.0 L410.3 630.7 L408.7 630.3 L407.1 629.9 L405.5 629.5 L404.0 629.1 L402.4 628.7 L400.8 628.2 L399.2 627.8 L397.7 627.3 L396.1 626.8 L394.6 626.3 L393.0 625.8 L391.5 625.3 L389.9 624.8 L388.4 624.2 L386.9 623.7 L385.3 623.1 L383.8 622.5 L382.3 621.9 L380.8 621.3 L379.3 620.7 L377.8 620.0 L376.3 619.4 L374.8 618.7 L373.3 618.0 L371.8 617.4 L370.4 616.7 L368.9 615.9 L367.4 615.2 L366.0 614.5 L364.6 613.7 L363.1 613.0 L361.7 612.2 L360.3 611.4 L358.9 610.6 L357.5 609.8 L356.1 608.9 L354.7 608.1 L353.3 607.3 L351.9 606.4 L350.5 605.5 L349.2 604.6 L347.8 603.7 L346.5 602.8 L345.1 601.9 L343.8 601.0 L342.5 600.0 L341.2 599.1 L339.9 598.1 L338.6 597.1 L337.3 596.1 L336.0 595.1 L334.8 594.1 L333.5 593.1 L332.3 592.1 L331.0 591.0 L329.8 590.0 L328.6 588.9 L327.4 587.8 L326.2 586.7 L325.0 585.6 L323.8 584.5 L322.6 583.4 L321.5 582.3 L320.3 581.2 L319.2 580.0 L318.1 578.9 L317.0 577.7 L315.9 576.5 L314.8 575.3 L313.7 574.1 L312.6 572.9 L311.5 571.7 L310.5 570.5 L309.4 569.2 L308.4 568.0 L307.4 566.8 L306.4 565.5 L305.4 564.2 L304.4 562.9 L303.4 561.7 L302.5 560.4 L301.5 559.1 L300.6 557.7 L299.7 556.4 L298.7 555.1 L297.8 553.8 L297.0 552.4 L296.1 551.1 L295.2 549.7 L294.4 548.3 L293.5 547.0 L292.7 545.6 L291.9 544.2 L291.1 542.8 L290.3 541.4 L289.5 540.0 L288.7 538.6 L288.0 537.1 L287.2 535.7 L286.5 534.3 L285.8 532.8 L285.1 531.4 L284.4 529.9 L283.7 528.5 L283.1 527.0 L282.4 525.5 L281.8 524.0 L281.2 522.6 L280.5 521.1 L279.9 519.6 L279.4 518.1 L278.8 516.6 L278.2 515.1 L277.7 513.5 L277.2 512.0 L276.6 510.5 L276.1 509.0 L275.7 507.4 L275.2 505.9 L274.7 504.3 L274.3 502.8 L273.8 501.2 L273.4 499.7 L273.0 498.1 L272.6 496.6 L272.2 495.0 L271.9 493.4 L271.5 491.9 L271.2 490.3 L270.9 488.7 L270.5 487.1 L270.3 485.5 L270.0 484.0 L269.7 482.4 L269.4 480.8 L269.2 479.2 L269.0 477.6 L268.8 476.0 L268.6 474.4 L268.4 472.8 L268.2 471.2 L268.1 469.6 L267.9 468.0 L267.8 466.3 L267.7 464.7 L267.6 463.1 L267.5 461.5 L267.4 459.9 L267.4 458.3 L267.3 456.7 L267.3 455.0 L267.3 453.4 L267.3 451.8 L267.3 450.2 L267.3 448.6 L267.4 447.0 L267.4 445.4 L267.5 443.7 L267.6 442.1 L267.7 440.5 L267.8 438.9 L267.9 437.3 L268.1 435.7 L268.2 434.1 L268.4 432.4 L268.6 430.8 L268.8 429.2 L269.0 427.6 L269.2 426.0 L269.4 424.4 L269.7 422.8 L270.0 421.2 L270.2 419.6 L270.5 418.0 L270.8 416.4 L271.2 414.9 L271.5 413.3 L271.8 411.7 L272.2 410.1 L272.6 408.5 L273.0 407.0 L273.4 405.4 L273.8 403.8 L274.2 402.3 L274.7 400.7 L275.1 399.2 L275.6 397.6 L276.1 396.1 L276.6 394.5 L277.1 393.0 L277.6 391.4 L278.1 389.9 L278.7 388.4 L279.2 386.9 L279.8 385.3 L280.4 383.8 L281.0 382.3 L281.6 380.8 L282.2 379.3 L282.9 377.8 L283.5 376.4 L284.2 374.9 L284.9 373.4 L285.6 371.9 L286.3 370.5 L287.0 369.0 L287.7 367.6 L288.5 366.1 L289.2 364.7 L290.0 363.3 L290.8 361.8 L291.5 360.4 L292.3 359.0 L293.2 357.6 L294.0 356.2 L294.8 354.8 L295.7 353.4 L296.5 352.1 L297.4 350.7 L298.3 349.3 L299.2 348.0 L300.1 346.6 L301.0 345.3 L301.9 344.0 L302.9 342.7 L303.8 341.3 L304.8 340.0 L305.7 338.7 L306.7 337.5 L307.7 336.2 L308.7 334.9 L309.8 333.6 L310.8 332.4 L311.8 331.2 L312.9 329.9 L313.9 328.7 L315.0 327.5 L316.1 326.3 L317.2 325.1 L318.3 323.9 L319.4 322.7 L320.5 321.5 L321.6 320.4 L322.7 319.2 L323.9 318.1 L325.1 317.0 L326.2 315.9 L327.4 314.8 L328.6 313.7 L329.8 312.6 L331.0 311.5 L332.2 310.4 L333.4 309.4 L334.6 308.3 L335.9 307.3 L337.1 306.3 L338.4 305.3 L339.6 304.3 L340.9 303.3 L342.2 302.3 L343.5 301.3 L344.8 300.4 L346.1 299.4 L347.4 298.5 L348.7 297.6 L350.1 296.7 L351.4 295.8 L352.7 294.9 L354.1 294.0 L355.4 293.1 L356.8 292.3 L358.2 291.5 L359.6 290.6 L360.9 289.8 L362.3 289.0 L363.7 288.2 L365.1 287.4 L366.6 286.7 L368.0 285.9 L369.4 285.2 L370.8 284.5 L372.3 283.7 L373.7 283.0 L375.2 282.4 L376.6 281.7 L378.1 281.0 L379.5 280.4 L381.0 279.7 L382.5 279.1 L384.0 278.5 L385.4 277.9 L386.9 277.3 L388.4 276.7 L389.9 276.2 L391.4 275.6 L392.9 275.1 L394.5 274.6 L396.0 274.1 L397.5 273.6 L399.0 273.1 L400.6 272.6 L402.1 272.2 L403.6 271.7 L405.2 271.3 L406.7 270.9 L408.3 270.5 L409.8 270.1 L411.4 269.7 L412.9 269.4 L414.5 269.0 L416.0 268.7 L417.6 268.4 L419.2 268.1 L420.8 267.8 L422.3 267.5 L423.9 267.3 L425.5 267.0 L427.1 266.8 L428.6 266.6 L430.2 266.4"/>
</g>
<rect x="846" y="48" width="54" height="758" fill="#000"/>
<rect x="0" y="888" width="900" height="12" fill="#000"/>
<path d="M888 6.5 H895 M888.5 6 V15 M889 7 L895 14 M892 14.5 H895.5 M895.5 11 V15" stroke="#ffff00" stroke-width="1" fill="none" shape-rendering="crispEdges"/>
<rect x="873.5" y="87.5" width="20" height="714" fill="none" stroke="#999" stroke-width="1" shape-rendering="crispEdges"/>
<g shape-rendering="crispEdges"><rect x="875" y="89" width="17" height="91" fill="url(#g0)"/><rect x="875" y="180" width="17" height="89" fill="url(#g1)"/><rect x="875" y="269" width="17" height="89" fill="url(#g2)"/><rect x="875" y="358" width="17" height="89" fill="url(#g3)"/><rect x="875" y="447" width="17" height="90" fill="url(#g4)"/><rect x="875" y="537" width="17" height="89" fill="url(#g5)"/><rect x="875" y="626" width="17" height="89" fill="url(#g6)"/></g>
</svg>
<div class="ring" id="r100" style="left:428.2px;top:74.9px;">100 NMI</div>
<div class="ring" id="r50" style="left:430.7px;top:260.6px;">50 NMI</div>
<div class="t" id="hdr" style="left:714.8px;top:5.8px;font-size:12px;transform:scale(0.972,1.0);">NEXLAB-College of DuPage</div>
<div class="t" id="nids" style="left:863.3px;top:52.6px;font-size:13px;transform:scale(1.0,1.05);">NIDS</div>
<div class="t" id="unit" style="left:814.3px;top:64px;font-size:12px;transform:scale(1.09,0.95);">[kg/m2]</div>
<div class="lab" style="top:774.4px">0</div><div class="lab" style="top:733.4px">5</div><div class="lab" style="top:692.4px">10</div><div class="lab" style="top:651.4px">15</div><div class="lab" style="top:610.4px">20</div><div class="lab" style="top:569.4px">25</div><div class="lab" style="top:528.4px">30</div><div class="lab" style="top:487.4px">35</div><div class="lab" style="top:446.4px">40</div><div class="lab" style="top:405.4px">45</div><div class="lab" style="top:364.4px">50</div><div class="lab" style="top:323.4px">55</div><div class="lab" style="top:282.4px">60</div><div class="lab" style="top:241.4px">65</div><div class="lab" style="top:200.4px">70</div><div class="lab" style="top:159.4px">75</div><div class="lab" style="top:118.4px">80</div>
<div class="t" id="ttl" style="left:161.5px;top:887.8px;color:#fff;font-size:12px;transform:scale(1.25,0.97);">DIGITAL VERTICALLY INTEGRATED LIQUID (VIL) - KAEC 15 DEC 25 21:56</div>
</body></html>
